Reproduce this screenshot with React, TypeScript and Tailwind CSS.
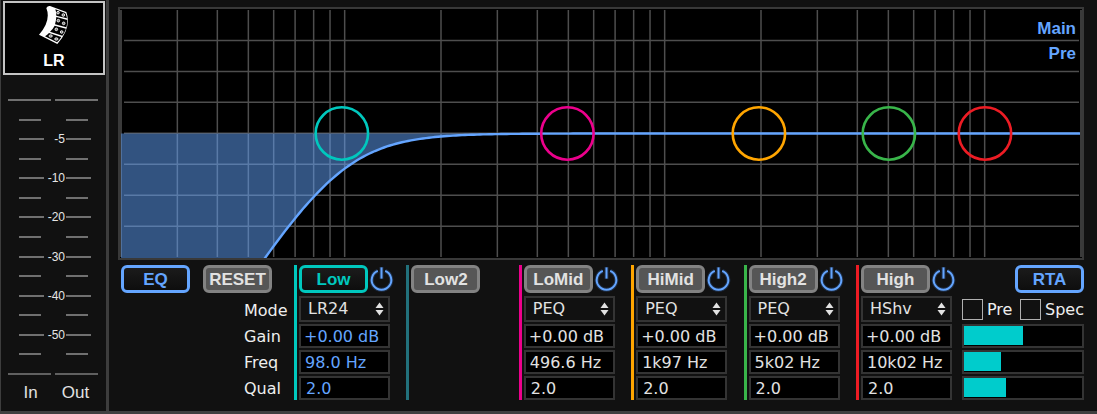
import React, { useState } from "react";

interface Band {
  name: string;
  color: string;
  mode?: string;
  gain?: string;
  freq?: string;
  hz?: number;
  qual?: string;
  selected?: boolean;
}

const bands: Band[] = [
  { name: "Low", color: "#00c8be", mode: "LR24", gain: "+0.00 dB", freq: "98.0 Hz", hz: 98, qual: "2.0", selected: true },
  { name: "Low2", color: "#22717c" },
  { name: "LoMid", color: "#ec008c", mode: "PEQ", gain: "+0.00 dB", freq: "496.6 Hz", hz: 496.6, qual: "2.0" },
  { name: "HiMid", color: "#ffa500", mode: "PEQ", gain: "+0.00 dB", freq: "1k97 Hz", hz: 1970, qual: "2.0" },
  { name: "High2", color: "#39b54a", mode: "PEQ", gain: "+0.00 dB", freq: "5k02 Hz", hz: 5020, qual: "2.0" },
  { name: "High", color: "#ed1c24", mode: "HShv", gain: "+0.00 dB", freq: "10k02 Hz", hz: 10020, qual: "2.0" },
];

const modes = ["PEQ", "LShv", "HShv", "LCut", "HCut", "LR24"];

// graph geometry, 20 Hz - 20 kHz and +-20 dB
const WIDTH = 962;
const HEIGHT = 249;
const ZERO = 124.5;
const DB = 6.19;
const freqToX = (f: number) => 1 + 320 * Math.log10(f / 20);

const gridFreqs: number[] = [];
for (const decade of [10, 100, 1000, 10000]) {
  for (let i = 1; i < 10; i++) {
    const f = decade * i;
    if (f >= 20 && f <= 20000) gridFreqs.push(f);
  }
}

// 24 dB/oct Linkwitz-Riley low cut
function curvePoints(fc: number) {
  const points: string[] = [];
  for (let x = 144; x <= 960; x += 3) {
    const f = 20 * Math.pow(10, (x - 1) / 320);
    const r4 = Math.pow(f / fc, 4);
    const db = 20 * Math.log10(r4 / (1 + r4));
    points.push(`${x},${(ZERO - db * DB).toFixed(2)}`);
  }
  return points.join(" ");
}

function Graph() {
  const curve = curvePoints(98);
  return (
    <div className="relative border-2 border-[#393939] bg-black">
      <svg viewBox={`0 0 ${WIDTH} ${HEIGHT}`} className="block w-full h-auto" fill="none">
        <g stroke="#4e4e4e" strokeWidth="1.5">
          {gridFreqs.map((f) => (
            <line key={f} x1={freqToX(f)} x2={freqToX(f)} y1="1" y2="248" />
          ))}
          {[-3, -2, -1, 0, 1, 2, 3].map((n) => (
            <line key={n} x1="4" x2="959" y1={ZERO - 0.2 + n * 30.95} y2={ZERO - 0.2 + n * 30.95} />
          ))}
        </g>
        <polygon points={`1,${HEIGHT} 1,${ZERO} 960,${ZERO} ${curve.split(" ").reverse().join(" ")}`} fill="#64a5ff" fillOpacity="0.5" />
        <polyline points={curve} stroke="#64a5ff" strokeWidth="2.4" />
        {bands.map((b) =>
          b.hz ? <circle key={b.name} cx={freqToX(b.hz)} cy={ZERO} r="26.2" stroke={b.color} strokeWidth="2.6" /> : null
        )}
      </svg>
      <div className="absolute top-[7px] right-[6px] text-right font-bold text-[17px] leading-[25px] text-[#64a5ff]">
        <p>Main</p>
        <p>Pre</p>
      </div>
    </div>
  );
}

function PushButton({ label, tone = "off" }: { label: string; tone?: "off" | "blue" | "teal" }) {
  const tones = {
    off: "border-[#838383] bg-[#565656] text-[#e2e2e2]",
    blue: "border-[#64a5ff] bg-linear-to-b from-[#1b1b1b] to-[#0e0e0e] text-[#64a5ff]",
    teal: "border-[#00c8be] bg-linear-to-b from-[#1b1b1b] to-[#0e0e0e] text-[#00c8be]",
  };
  return (
    <button
      type="button"
      className={`w-[69px] h-7 shrink-0 flex items-center justify-center rounded-md border-[3px] font-bold text-[17px] leading-none cursor-pointer ${tones[tone]}`}
    >
      {label}
    </button>
  );
}

function PowerButton({ name }: { name: string }) {
  return (
    <button type="button" aria-label={`${name} on`} className="shrink-0 cursor-pointer">
      <svg width="27" height="28" viewBox="0 0 27 28" fill="none">
        <g stroke="#3a6fc0" strokeOpacity="0.3" strokeWidth="4">
          <path d="M9.8 5.9A9.8 9.8 0 1 0 17.2 5.9" />
          <path d="M13.5 2V13.8" />
        </g>
        <g stroke="#64a5ff" strokeWidth="2">
          <path d="M9.8 5.9A9.8 9.8 0 1 0 17.2 5.9" />
          <path d="M13.5 2.4V13.6" />
        </g>
      </svg>
    </button>
  );
}

function BandColumn({ band }: { band: Band }) {
  const valueColor = band.selected ? "text-[#64a5ff]" : "text-[#e2e2e2]";
  const inputClass = `w-full h-6 border-2 border-[#343434] bg-black text-[16px] leading-none outline-none ${valueColor}`;

  return (
    <div className="w-[100px] flex gap-[2px]">
      <div className="w-[3px]" style={{ backgroundColor: band.color }} />
      <div className="flex-1 min-w-0 flex flex-col font-['DejaVu_Sans',sans-serif]">
        <div className="flex font-['Liberation_Sans',Arial,sans-serif]">
          <PushButton label={band.name} tone={band.selected ? "teal" : "off"} />
          {band.mode && <PowerButton name={band.name} />}
        </div>
        {band.mode && (
          <div className="w-[91px] mt-[3px] flex flex-col gap-[2px]">
            <div className="relative">
              <select
                aria-label={`${band.name} mode`}
                defaultValue={band.mode}
                className="block w-full h-[26px] appearance-none border-2 border-[#343434] bg-[#111] pl-[7px] text-[16px] leading-none text-[#e2e2e2] outline-none"
              >
                {modes.map((m) => (
                  <option key={m}>{m}</option>
                ))}
              </select>
              <svg className="absolute right-[6px] top-[6px] pointer-events-none" width="9" height="14" viewBox="0 0 9 14" fill="#e2e2e2">
                <path d="M4.5 0.5L8.5 6H0.5Z" />
                <path d="M4.5 13.5L8.5 8H0.5Z" />
              </svg>
            </div>
            <input aria-label={`${band.name} gain`} defaultValue={band.gain} className={`pl-[3px] ${inputClass}`} />
            <input aria-label={`${band.name} frequency`} defaultValue={band.freq} className={`pl-1 ${inputClass}`} />
            <input aria-label={`${band.name} quality`} defaultValue={band.qual} className={`pl-[5px] ${inputClass}`} />
          </div>
        )}
      </div>
    </div>
  );
}

function LevelSlider({ label, initial }: { label: string; initial: number }) {
  const [value, setValue] = useState(initial);
  return (
    <div className="h-6 border-2 border-[#343434] bg-black">
      <input
        type="range"
        aria-label={label}
        min={0}
        max={100}
        value={value}
        onChange={(e) => setValue(Number(e.target.value))}
        className="block w-full h-[19px] appearance-none outline-none [&::-webkit-slider-thumb]:appearance-none [&::-webkit-slider-thumb]:w-0"
        style={{ background: `linear-gradient(to right, #00cccc ${value}%, #000 ${value}%)` }}
      />
    </div>
  );
}

function RtaColumn() {
  return (
    <div className="w-[122px] shrink-0 flex flex-col">
      <div className="flex justify-end">
        <PushButton label="RTA" tone="blue" />
      </div>
      <div className="h-[26px] mt-[3px] mb-[2px] flex items-center justify-between font-['DejaVu_Sans',sans-serif] text-[16px] leading-none text-[#eee]">
        <label className="flex items-center gap-1">
          <input type="checkbox" className="size-[21px] appearance-none border-[1px] border-[#b0b0b0] bg-[#111] checked:bg-[#00cccc]" />
          <span className="pt-[2px]">Pre</span>
        </label>
        <label className="flex items-center gap-1">
          <input type="checkbox" className="size-[21px] appearance-none border-[1px] border-[#b0b0b0] bg-[#111] checked:bg-[#00cccc]" />
          <span className="pt-[2px]">Spec</span>
        </label>
      </div>
      <div className="flex flex-col gap-[2px]">
        <LevelSlider label="RTA gain" initial={50} />
        <LevelSlider label="RTA decay" initial={31} />
        <LevelSlider label="RTA range" initial={36} />
      </div>
    </div>
  );
}

function StageboxIcon() {
  return (
    <svg width="32" height="40" viewBox="24 15 96 120" fill="none">
      <path d="M60 18L109 36Q126 82 82 132L27 104Q64 62 49 24Q53 17 60 18Z" fill="#fff" />
      <path d="M76 28L106 39Q110 46 111 55L79 47Q79 36 76 28Z" fill="#000" />
      <path d="M79 51L112 60Q112 72 109 82L75 73Q78 62 79 51Z" fill="#000" />
      <path d="M74 77L108 86Q104 98 97 107L60 95Q69 87 74 77Z" fill="#000" />
      <path d="M57 99L94 111Q88 121 81 127L45 109Q52 105 57 99Z" fill="#000" />
      <g fill="#777" stroke="#fff" strokeWidth="2.5">
        <ellipse cx="84" cy="38" rx="4" ry="4" />
        <ellipse cx="100" cy="45" rx="4" ry="4" />
        <ellipse cx="85" cy="62" rx="4" ry="4" />
        <ellipse cx="101" cy="70" rx="4" ry="4" />
        <ellipse cx="79" cy="88" rx="4" ry="4" />
        <ellipse cx="95" cy="96" rx="4" ry="4" />
        <ellipse cx="62" cy="108" rx="5" ry="3.5" />
        <ellipse cx="79" cy="117" rx="5" ry="3.5" />
      </g>
    </svg>
  );
}

const scale = ["", "-5", "", "-10", "", "-20", "", "-30", "", "-40", "", "-50", ""];

function Meters() {
  return (
    <div className="pt-6 pl-[7px] pr-2">
      <div className="h-[2px] flex gap-1">
        <span className="flex-1 bg-[#707070]" />
        <span className="flex-1 bg-[#707070]" />
      </div>
      <div className="h-[272px] pl-[11px] flex flex-col justify-evenly">
        {scale.map((label, i) => (
          <div key={i} className="h-[2px] grid grid-cols-[25px_22px_25px]">
            <span className={label ? "h-[2px] bg-[#707070]" : "h-[2px] w-[22px] bg-[#707070]"} />
            <span className="text-right pr-[1px] text-[12px] leading-[2px] text-[#e6e6e6]">{label}</span>
            <span className={label ? "h-[2px] bg-[#707070]" : "h-[2px] w-[22px] bg-[#707070]"} />
          </div>
        ))}
      </div>
      <div className="h-[2px] flex gap-1">
        <span className="flex-1 bg-[#606060]" />
        <span className="flex-1 bg-[#606060]" />
      </div>
      <div className="mt-2 flex text-[17px] leading-5 text-[#e2e2e2] text-center">
        <p className="w-1/2">In</p>
        <p className="w-1/2">Out</p>
      </div>
    </div>
  );
}

export default function App() {
  return (
    <main className="min-h-screen flex bg-[#111] border-b-[3px] border-[#404040] font-['Liberation_Sans',Arial,sans-serif]">
      <aside className="w-[109px] shrink-0 border-l border-r-[3px] border-[#3d3d3d]">
        <div className="mt-px ml-[2px] mr-px h-[74px] flex flex-col items-center border-2 border-[#c4c4c4] bg-black pt-[2px]">
          <StageboxIcon />
          <p className="mt-[6px] font-bold text-[16px] leading-5 text-white">LR</p>
        </div>
        <Meters />
      </aside>

      <section className="flex-1 min-w-0 pt-[7px] pl-[9px] pr-[13px]">
        <Graph />
        <div className="mt-[5px] pl-[3px] flex items-start">
          <div className="w-[173px] shrink-0">
            <div className="flex gap-[13px]">
              <PushButton label="EQ" tone="blue" />
              <PushButton label="RESET" />
            </div>
            <div className="mt-[5px] pl-[123px] font-['DejaVu_Sans',sans-serif] text-[16px] leading-[26px] text-[#eee]">
              <p>Mode</p>
              <p>Gain</p>
              <p>Freq</p>
              <p>Qual</p>
            </div>
          </div>
          <div className="flex-1 flex justify-between mr-[6px]">
            {bands.map((b) => (
              <BandColumn key={b.name} band={b} />
            ))}
          </div>
          <RtaColumn />
        </div>
      </section>
    </main>
  );
}
